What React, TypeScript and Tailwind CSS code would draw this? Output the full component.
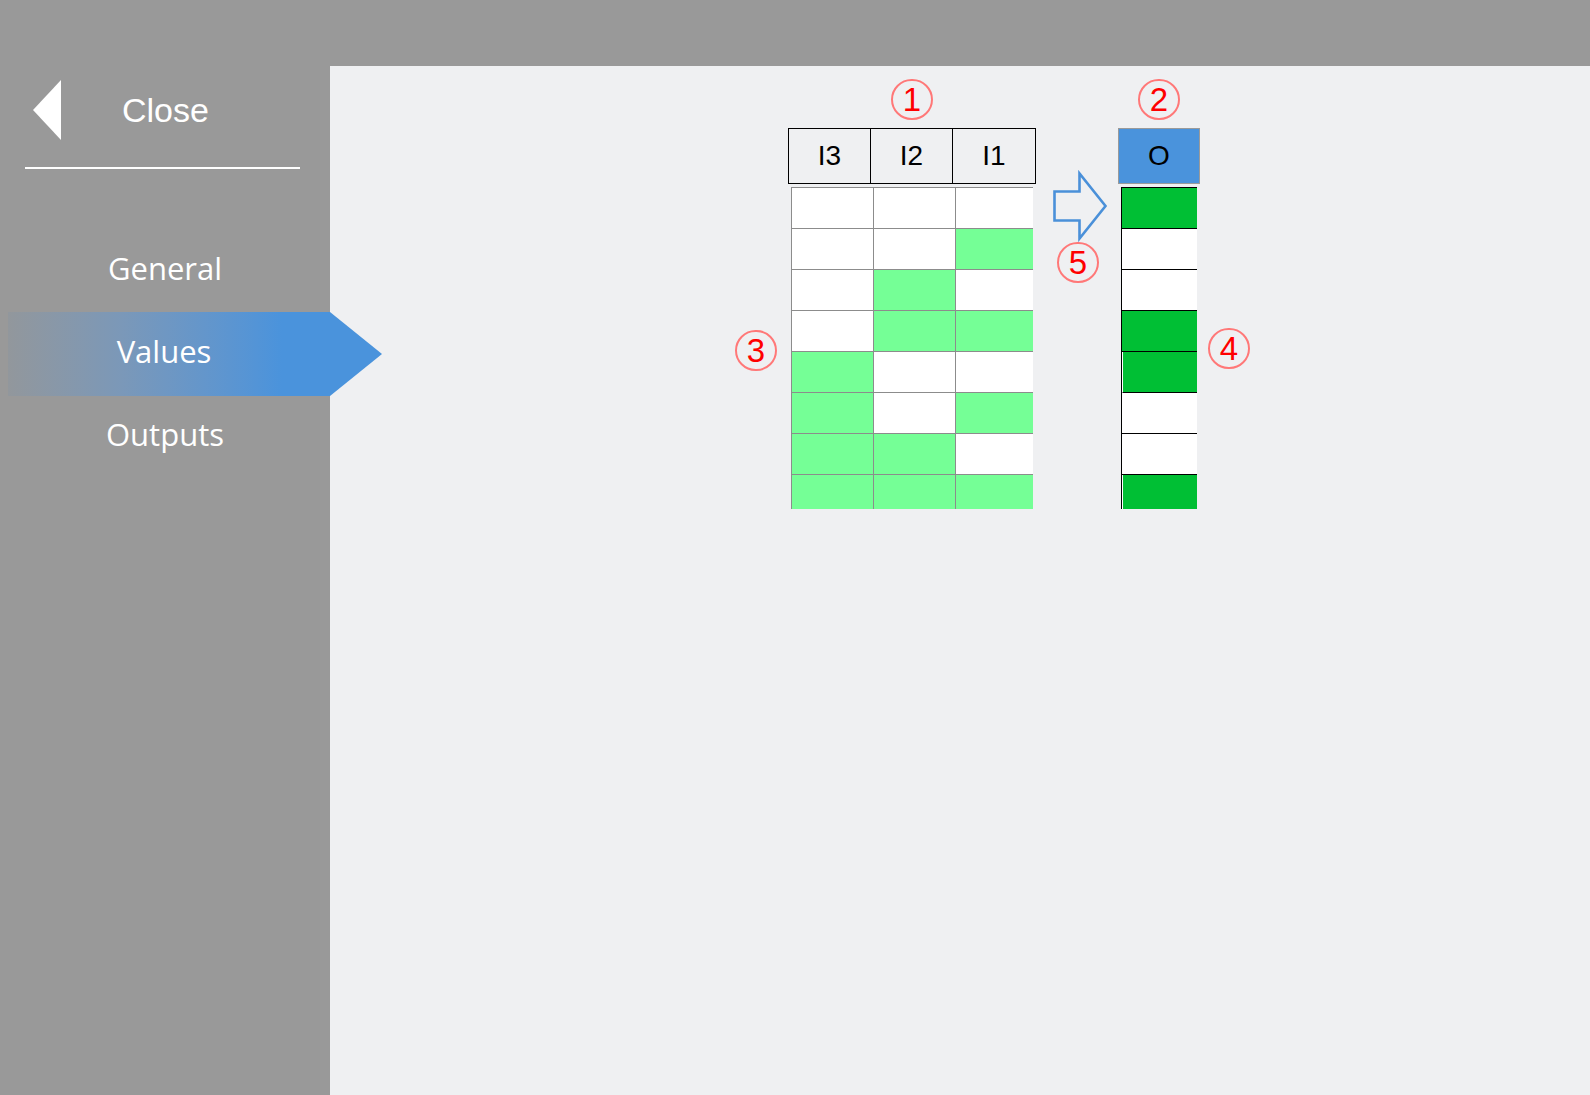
import type React from 'react'

const LIGHT = '#75ff96'
const DARK = '#00bf34'

// I3 I2 I1 rows (binary count) and resulting output
const inputRows = [0, 1, 2, 3, 4, 5, 6, 7].map((n) => [(n >> 2) & 1, (n >> 1) & 1, n & 1])
const outputs = [1, 0, 0, 1, 1, 0, 0, 1]

function Marker({ n }: { n: number }): React.JSX.Element {
  return (
    <div className="flex h-[41px] w-[42px] items-center justify-center rounded-full border-2 border-[#ff7878] font-['Liberation_Sans',Arial,sans-serif] text-[33px] leading-none text-[#ff0000]">
      {n}
    </div>
  )
}

function NavItem({ label }: { label: string }): React.JSX.Element {
  return (
    <div className="flex h-[82px] w-[330px] items-center justify-center pb-[6px] text-[31px] text-white">
      {label}
    </div>
  )
}

function Sidebar(): React.JSX.Element {
  return (
    <aside className="relative z-10 flex w-[330px] shrink-0 flex-col pt-[80px] font-['Open_Sans','Noto_Sans',sans-serif]">
      <button type="button" className="flex h-[60px] items-center text-left">
        <span className="ml-[33px] h-0 w-0 shrink-0 border-y-[30px] border-r-[28px] border-y-transparent border-r-white" />
        <span className="ml-[61px] font-['Liberation_Sans',Arial,sans-serif] text-[34px] leading-none text-white">
          Close
        </span>
      </button>
      <div className="ml-[25px] mt-[27px] h-[2px] w-[275px] bg-white" />

      <nav className="mt-[61px] flex flex-col">
        <NavItem label="General" />
        <div className="flex h-[84px] w-[382px] items-stretch">
          <div className="ml-[8px] flex w-[322px] shrink-0 items-center justify-center bg-linear-to-r from-[#92979c] from-0% via-[#7b98b8] via-35% to-[#4a93dc] to-85% pb-[6px] pr-[10px] text-[31px] text-white">
            Values
          </div>
          <div className="h-0 w-0 shrink-0 border-y-[42px] border-l-[52px] border-y-transparent border-l-[#4a93dc]" />
        </div>
        <NavItem label="Outputs" />
      </nav>
    </aside>
  )
}

function InputTable(): React.JSX.Element {
  return (
    <div className="flex w-[248px] flex-col">
      <div className="self-center">
        <Marker n={1} />
      </div>
      <div className="mt-[8px] grid h-[56px] grid-cols-3 border border-black font-['Liberation_Sans',Arial,sans-serif] text-[28px] text-black">
        {['I3', 'I2', 'I1'].map((h, i) => (
          <div
            key={h}
            className={`flex items-center justify-center ${i < 2 ? 'border-r border-black' : ''}`}
          >
            {h}
          </div>
        ))}
      </div>
      <div className="ml-[3px] mt-[3px] h-[322px] w-[242px] overflow-hidden">
        <div className="grid w-[247px] grid-cols-[repeat(3,82px)] border-l border-t border-[#8c8c8c]">
          {inputRows.map((row, r) =>
            row.map((v, c) => (
              <div
                key={`${r}-${c}`}
                className="h-[41px] border-b border-r border-[#8c8c8c]"
                style={{ backgroundColor: v ? LIGHT : '#ffffff' }}
              />
            )),
          )}
        </div>
      </div>
    </div>
  )
}

function OutputTable(): React.JSX.Element {
  return (
    <div className="flex w-[82px] flex-col">
      <div className="self-center">
        <Marker n={2} />
      </div>
      <div className="mt-[8px] flex h-[56px] items-center justify-center border border-[#9a9a9a] bg-[#4a93dc] font-['Liberation_Sans',Arial,sans-serif] text-[28px] text-black">
        O
      </div>
      <div className="ml-[3px] mt-[3px] h-[322px] w-[76px] overflow-hidden">
        <div className="w-[80px] border-l border-t border-black">
          {outputs.map((v, i) => (
            <div
              key={i}
              className={`h-[41px] border-b border-black ${i === 4 || i === 7 ? 'border-l border-l-white' : ''}`}
              style={{ backgroundColor: v ? DARK : '#ffffff' }}
            />
          ))}
        </div>
      </div>
    </div>
  )
}

function FlowArrow(): React.JSX.Element {
  return (
    <div className="ml-[17px] mt-[93px] flex w-[54px] flex-col">
      <svg width="54" height="68" viewBox="0 0 54 68" fill="none" className="overflow-visible">
        <polygon
          points="1.5,19.5 26.5,19.5 26.5,1.5 52.5,34 26.5,66.5 26.5,48.5 1.5,48.5"
          stroke="#4a90d9"
          strokeWidth="2.6"
          strokeLinejoin="miter"
        />
      </svg>
      <div className="ml-[4px] mt-[2px]">
        <Marker n={5} />
      </div>
    </div>
  )
}

export default function App(): React.JSX.Element {
  return (
    <div className="flex h-screen w-full overflow-hidden bg-[#999999]">
      <Sidebar />
      <div className="flex min-w-0 flex-1 flex-col">
        <div className="h-[66px] shrink-0" />
        <main className="flex flex-1 items-start bg-[#eff0f2] pl-[405px] pt-[13px]">
          <div className="mr-[11px] mt-[251px]">
            <Marker n={3} />
          </div>
          <InputTable />
          <FlowArrow />
          <div className="ml-[11px]">
            <OutputTable />
          </div>
          <div className="ml-[8px] mt-[249px]">
            <Marker n={4} />
          </div>
        </main>
      </div>
    </div>
  )
}
